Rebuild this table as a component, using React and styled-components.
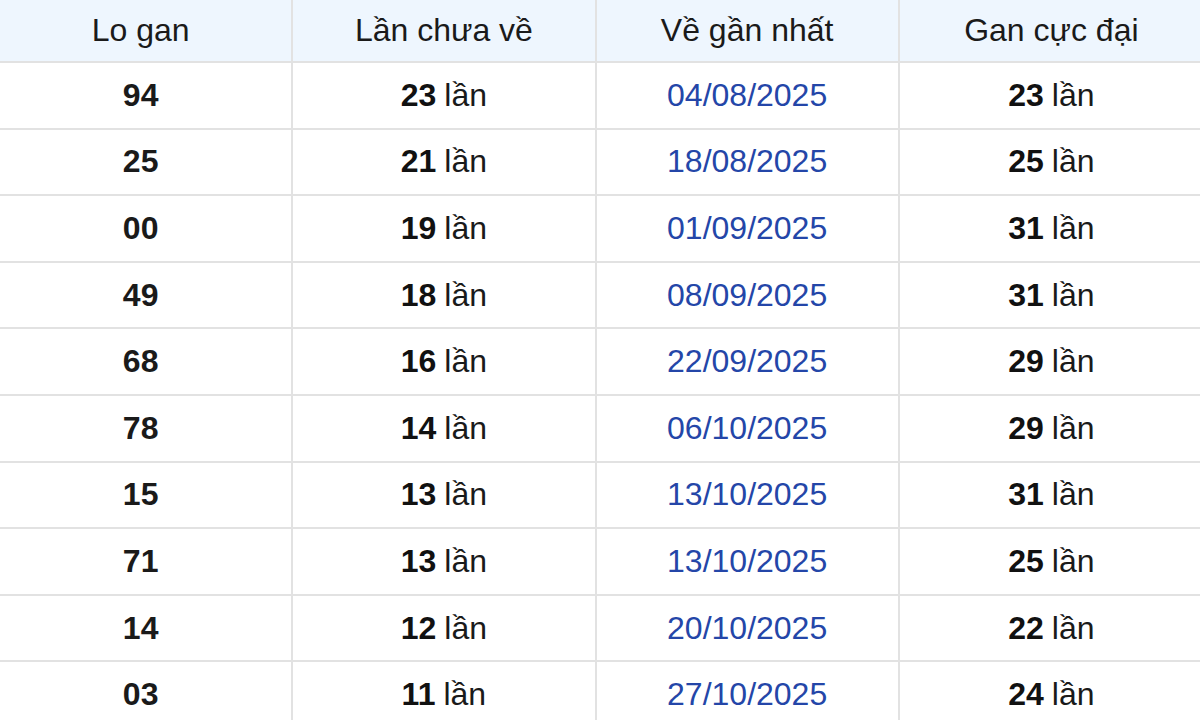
import React from 'react';
import styled, { createGlobalStyle } from 'styled-components';

const GlobalStyle = createGlobalStyle`
  body {
    margin: 0;
    background: #fff;
    overflow: hidden;
    font-family: "Liberation Sans", Arial, sans-serif;
  }
`;

const Table = styled.div`
  width: 1213px;
  margin-left: -10px;
  display: flex;
  flex-direction: column;
`;

const Row = styled.div`
  display: grid;
  grid-template-columns: repeat(4, 1fr);
  height: ${(p) => (p.$head ? '61px' : '64.6px')};
  border-bottom: 2px solid #e2e2e2;
  background: ${(p) => (p.$head ? '#eef6fe' : '#fff')};
`;

const Cell = styled.div`
  display: flex;
  align-items: center;
  justify-content: center;
  border-right: 2px solid #e2e2e2;
  font-size: 32px;
  color: ${(p) => (p.$date ? '#2446a8' : '#1a1a1a')};
  font-weight: ${(p) => (p.$bold ? 700 : 400)};
  white-space: nowrap;

  &:last-child {
    border-right: none;
  }
`;

const Num = styled.b`
  font-weight: 700;
  color: #111;
  margin-right: 8px;
`;

const rows = [
  ['94', 23, '04/08/2025', 23],
  ['25', 21, '18/08/2025', 25],
  ['00', 19, '01/09/2025', 31],
  ['49', 18, '08/09/2025', 31],
  ['68', 16, '22/09/2025', 29],
  ['78', 14, '06/10/2025', 29],
  ['15', 13, '13/10/2025', 31],
  ['71', 13, '13/10/2025', 25],
  ['14', 12, '20/10/2025', 22],
  ['03', 11, '27/10/2025', 24],
];

const Times = ({ n }) => (
  <>
    <Num>{n}</Num>lần
  </>
);

export default function App() {
  return (
    <>
      <GlobalStyle />
      <Table>
        <Row $head>
          <Cell>Lo gan</Cell>
          <Cell>Lần chưa về</Cell>
          <Cell>Về gần nhất</Cell>
          <Cell>Gan cực đại</Cell>
        </Row>
        {rows.map(([lo, miss, date, max]) => (
          <Row key={lo}>
            <Cell $bold>{lo}</Cell>
            <Cell><Times n={miss} /></Cell>
            <Cell $date>{date}</Cell>
            <Cell><Times n={max} /></Cell>
          </Row>
        ))}
      </Table>
    </>
  );
}
